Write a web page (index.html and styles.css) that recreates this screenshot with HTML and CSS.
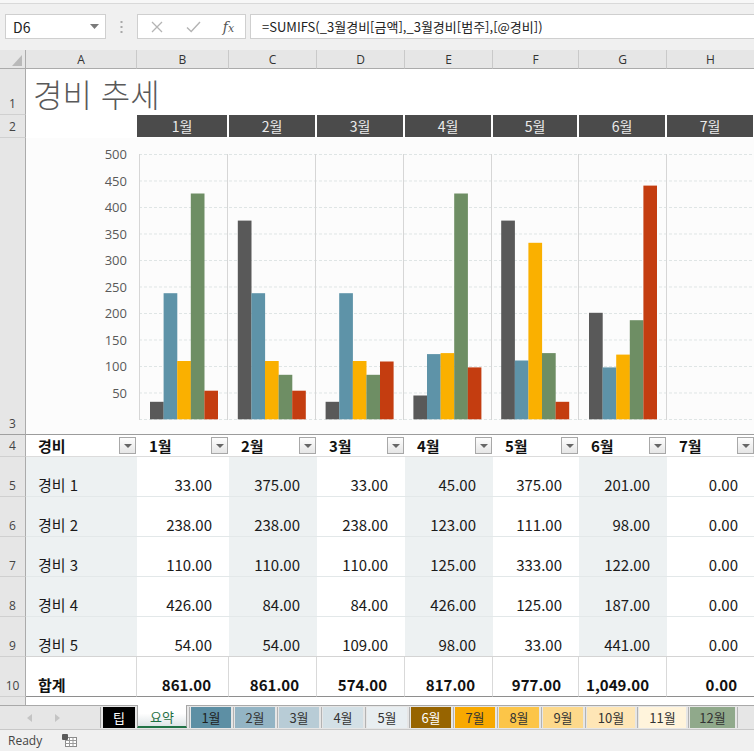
FILE: index.html
```html
<!DOCTYPE html>
<html lang="ko">
<head>
<meta charset="utf-8">
<title>경비 추세</title>
<link rel="stylesheet" href="styles.css">
</head>
<body>
<div class="topstrip"></div>
<div class="fbar">
  <div class="namebox"><span>D6</span><svg class="nb-arrow" width="9" height="5" viewBox="0 0 9 5"><path d="M0 0H9L4.5 5Z" fill="#7a7a7a"/></svg></div>
  <div class="vdots"><svg width="3" height="12" viewBox="0 0 3 12"><rect x="0.5" y="0" width="2" height="2" fill="#a8a8a8"/><rect x="0.5" y="5" width="2" height="2" fill="#a8a8a8"/><rect x="0.5" y="10" width="2" height="2" fill="#a8a8a8"/></svg></div>
  <div class="fbtns">
    <span class="fb"><svg width="12" height="12" viewBox="0 0 12 12"><path d="M1 1L11 11M11 1L1 11" stroke="#b4b4b4" stroke-width="1.3" fill="none"/></svg></span>
    <span class="fb"><svg width="15" height="12" viewBox="0 0 15 12"><path d="M1 6.5L5.2 10.5L14 1" stroke="#b4b4b4" stroke-width="1.4" fill="none"/></svg></span>
    <span class="fb fx"><i>f</i><i class="fxx">x</i></span>
  </div>
  <div class="finput">=SUMIFS(_3월경비[금액],_3월경비[범주],[@경비])</div>
</div>

<div class="sheet">
  <!-- column headers -->
  <div class="corner"><svg width="10" height="11" viewBox="0 0 10 11"><path d="M10 0V11H0Z" fill="#b9b9b9"/></svg></div>
  <div class="ch">A</div><div class="ch">B</div><div class="ch">C</div><div class="ch">D</div>
  <div class="ch">E</div><div class="ch">F</div><div class="ch">G</div><div class="ch">H</div>

  <!-- row 1 -->
  <div class="rh">1</div>
  <div class="title">경비 추세</div>

  <!-- row 2 -->
  <div class="rh">2</div>
  <div class="blank"></div>
  <div class="mh">1월</div><div class="mh">2월</div><div class="mh">3월</div><div class="mh">4월</div>
  <div class="mh">5월</div><div class="mh">6월</div><div class="mh">7월</div>

  <!-- row 3 : chart -->
  <div class="rh rh3">3</div>
  <div class="chart">
    <svg width="729" height="296" viewBox="0 0 729 296">
      <path class="grid" d="M113 16.5H729M113 43H729M113 69.5H729M113 96H729M113 122.5H729M113 149H729M113 175.5H729M113 202H729M113 228.5H729M113 255H729M113 281.5H729"/>
      <path class="vgrid" d="M113.5 16V282M201.5 16V282M289.5 16V282M377.5 16V282M465.5 16V282M552.5 16V282M640.5 16V282"/>
      <g class="axis">
        <text x="101" y="21">500</text>
        <text x="101" y="47.5">450</text>
        <text x="101" y="74">400</text>
        <text x="101" y="100.5">350</text>
        <text x="101" y="127">300</text>
        <text x="101" y="153.5">250</text>
        <text x="101" y="180">200</text>
        <text x="101" y="206.5">150</text>
        <text x="101" y="233">100</text>
        <text x="101" y="259.5">50</text>
      </g>
      <g>
        <rect class="s1" x="124" y="263.8" width="13.7" height="17.5"/>
        <rect class="s2" x="137.6" y="155.2" width="13.7" height="126.1"/>
        <rect class="s3" x="151.2" y="223" width="13.7" height="58.3"/>
        <rect class="s4" x="164.8" y="55.5" width="13.7" height="225.8"/>
        <rect class="s5" x="178.4" y="252.7" width="13.6" height="28.6"/>

        <rect class="s1" x="211.8" y="82.6" width="13.7" height="198.7"/>
        <rect class="s2" x="225.4" y="155.2" width="13.7" height="126.1"/>
        <rect class="s3" x="239" y="223" width="13.7" height="58.3"/>
        <rect class="s4" x="252.6" y="236.8" width="13.7" height="44.5"/>
        <rect class="s5" x="266.2" y="252.7" width="13.6" height="28.6"/>

        <rect class="s1" x="299.6" y="263.8" width="13.7" height="17.5"/>
        <rect class="s2" x="313.2" y="155.2" width="13.7" height="126.1"/>
        <rect class="s3" x="326.8" y="223" width="13.7" height="58.3"/>
        <rect class="s4" x="340.4" y="236.8" width="13.7" height="44.5"/>
        <rect class="s5" x="354" y="223.5" width="13.6" height="57.8"/>

        <rect class="s1" x="387.4" y="257.5" width="13.7" height="23.8"/>
        <rect class="s2" x="401" y="216.1" width="13.7" height="65.2"/>
        <rect class="s3" x="414.6" y="215.1" width="13.7" height="66.2"/>
        <rect class="s4" x="428.2" y="55.5" width="13.7" height="225.8"/>
        <rect class="s5" x="441.8" y="229.4" width="13.6" height="51.9"/>

        <rect class="s1" x="475.2" y="82.6" width="13.7" height="198.7"/>
        <rect class="s2" x="488.8" y="222.5" width="13.7" height="58.8"/>
        <rect class="s3" x="502.4" y="104.8" width="13.7" height="176.5"/>
        <rect class="s4" x="516" y="215.1" width="13.7" height="66.2"/>
        <rect class="s5" x="529.6" y="263.8" width="13.6" height="17.5"/>

        <rect class="s1" x="563" y="174.8" width="13.7" height="106.5"/>
        <rect class="s2" x="576.6" y="229.4" width="13.7" height="51.9"/>
        <rect class="s3" x="590.2" y="216.6" width="13.7" height="64.7"/>
        <rect class="s4" x="603.8" y="182.2" width="13.7" height="99.1"/>
        <rect class="s5" x="617.4" y="47.6" width="13.6" height="233.7"/>
      </g>
    </svg>
  </div>

  <!-- row 4 : table header -->
  <div class="rh rh4">4</div>
  <div class="th"><span>경비</span><span class="dd"></span></div>
  <div class="th"><span>1월</span><span class="dd"></span></div>
  <div class="th"><span>2월</span><span class="dd"></span></div>
  <div class="th"><span>3월</span><span class="dd"></span></div>
  <div class="th"><span>4월</span><span class="dd"></span></div>
  <div class="th"><span>5월</span><span class="dd"></span></div>
  <div class="th"><span>6월</span><span class="dd"></span></div>
  <div class="th"><span>7월</span><span class="dd"></span></div>

  <!-- row 5 -->
  <div class="rh">5</div>
  <div class="c lab band">경비 1</div>
  <div class="c">33.00</div><div class="c band">375.00</div><div class="c">33.00</div><div class="c band">45.00</div>
  <div class="c">375.00</div><div class="c band">201.00</div><div class="c">0.00</div>

  <!-- row 6 -->
  <div class="rh">6</div>
  <div class="c lab band">경비 2</div>
  <div class="c">238.00</div><div class="c band">238.00</div><div class="c">238.00</div><div class="c band">123.00</div>
  <div class="c">111.00</div><div class="c band">98.00</div><div class="c">0.00</div>

  <!-- row 7 -->
  <div class="rh">7</div>
  <div class="c lab band">경비 3</div>
  <div class="c">110.00</div><div class="c band">110.00</div><div class="c">110.00</div><div class="c band">125.00</div>
  <div class="c">333.00</div><div class="c band">122.00</div><div class="c">0.00</div>

  <!-- row 8 -->
  <div class="rh">8</div>
  <div class="c lab band">경비 4</div>
  <div class="c">426.00</div><div class="c band">84.00</div><div class="c">84.00</div><div class="c band">426.00</div>
  <div class="c">125.00</div><div class="c band">187.00</div><div class="c">0.00</div>

  <!-- row 9 -->
  <div class="rh">9</div>
  <div class="c lab band last">경비 5</div>
  <div class="c last">54.00</div><div class="c band last">54.00</div><div class="c last">109.00</div><div class="c band last">98.00</div>
  <div class="c last">33.00</div><div class="c band last">441.00</div><div class="c last">0.00</div>

  <!-- row 10 -->
  <div class="rh">10</div>
  <div class="c lab tot">합계</div>
  <div class="c tot">861.00</div><div class="c tot">861.00</div><div class="c tot">574.00</div><div class="c tot">817.00</div>
  <div class="c tot">977.00</div><div class="c tot">1,049.00</div><div class="c tot">0.00</div>

  <!-- row 11 (partial) -->
  <div class="rh rh11"></div>
  <div class="r11"></div>
</div>

<div class="tabbar">
  <div class="nav">
    <svg class="navl" width="5" height="8" viewBox="0 0 5 8"><path d="M5 0V8L0 4Z" fill="#c4c4c4"/></svg>
    <svg class="navr" width="5" height="8" viewBox="0 0 5 8"><path d="M0 0V8L5 4Z" fill="#c4c4c4"/></svg>
  </div>
  <span class="vline"></span>
  <div class="tab t-tip">팁</div>
  <div class="tab active">요약</div>
  <span class="sep"></span>
  <div class="tab t1">1월</div><span class="sep"></span>
  <div class="tab t2">2월</div><span class="sep"></span>
  <div class="tab t3">3월</div><span class="sep"></span>
  <div class="tab t4">4월</div><span class="sep"></span>
  <div class="tab t5">5월</div><span class="sep"></span>
  <div class="tab t6">6월</div><span class="sep"></span>
  <div class="tab t7">7월</div><span class="sep"></span>
  <div class="tab t8">8월</div><span class="sep"></span>
  <div class="tab t9">9월</div><span class="sep"></span>
  <div class="tab t10">10월</div><span class="sep"></span>
  <div class="tab t11">11월</div><span class="sep"></span>
  <div class="tab t12">12월</div><span class="sep"></span>
</div>

<div class="status">
  <span class="ready">Ready</span>
  <svg class="macro" width="15" height="13" viewBox="0 0 15 13">
    <rect x="3.5" y="3.5" width="11" height="9" fill="#fff" stroke="#8a8a8a"/>
    <path d="M3.5 6.5H14.5M3.5 9.5H14.5M7.5 3.5V12.5M11 3.5V12.5" stroke="#9a9a9a" stroke-width="1"/>
    <rect x="0" y="0" width="6" height="6" rx="1" fill="#5a5a5a"/>
  </svg>
</div>
</body>
</html>
```

FILE: styles.css
```css
* { box-sizing: border-box; }
html, body { margin: 0; padding: 0; }
body {
  width: 754px;
  height: 751px;
  overflow: hidden;
  background: #f0f0f0;
  font-family: "Noto Sans CJK KR", "Noto Sans", sans-serif;
  color: #222;
}

/* ---------- top / formula bar ---------- */
.topstrip {
  height: 4px;
  background: #f7f7f7;
  border-bottom: 1px solid #d9d9d9;
}
.fbar {
  height: 46px;
  display: flex;
  align-items: flex-start;
  padding-top: 10px;
  background: #f0f0f0;
}
.namebox {
  margin-left: 5px;
  width: 101px;
  height: 25px;
  background: #fff;
  border: 1px solid #cfcfcf;
  display: flex;
  align-items: center;
  justify-content: space-between;
  padding: 0 6px 0 7px;
  font-size: 14px;
}
.vdots {
  width: 31px;
  height: 25px;
  display: flex;
  align-items: center;
  justify-content: center;
}
.fbtns {
  width: 109px;
  height: 25px;
  background: #fff;
  border: 1px solid #cfcfcf;
  display: flex;
  align-items: center;
}
.fb {
  width: 37px;
  height: 23px;
  display: flex;
  align-items: center;
  justify-content: center;
}
.fb.fx {
  width: 33px;
  font-family: "DejaVu Serif", "Liberation Serif", serif;
  font-size: 14px;
  color: #555;
}
.fxx { font-size: 11px; margin-top: 3px; }
.finput {
  flex: 1;
  margin-left: 4px;
  height: 25px;
  background: #fff;
  border: 1px solid #cfcfcf;
  border-right: none;
  padding-left: 11px;
  font-size: 13px;
  display: flex;
  align-items: center;
  white-space: nowrap;
  color: #222;
}

/* ---------- sheet grid ---------- */
.sheet {
  width: 754px;
  height: 655px;
  overflow: hidden;
  background: #fff;
  display: grid;
  grid-template-columns: 26px 111px 92px 88px 88px 88px 86px 88px 88px;
  grid-template-rows: 19px 46px 23px 297px 22px repeat(6, 40px) 8px;
}
.corner {
  background: #e6e6e6;
  border-right: 1px solid #ababab;
  border-bottom: 1px solid #ababab;
  display: flex;
  align-items: flex-end;
  justify-content: flex-end;
  padding: 0 3px 2px 0;
}
.ch {
  background: #e6e6e6;
  border-right: 1px solid #c9c9c9;
  border-bottom: 1px solid #ababab;
  font-family: "Open Sans", "Noto Sans", sans-serif;
  font-size: 12px;
  color: #333;
  display: flex;
  align-items: center;
  justify-content: center;
}
.rh {
  background: #e6e6e6;
  border-right: 1px solid #ababab;
  border-bottom: 1px solid #d0d0d0;
  font-family: "Open Sans", "Noto Sans", sans-serif;
  font-size: 12px;
  color: #444;
  display: flex;
  align-items: flex-end;
  justify-content: center;
  padding-bottom: 2px;
  line-height: 16px;
}
.rh3 { border-bottom-color: #a0a0a0; }
.rh11 { border-bottom: none; }

.title {
  grid-column: 2 / -1;
  font-size: 32px;
  font-weight: 300;
  color: #595959;
  padding-left: 7px;
  padding-bottom: 2px;
  line-height: 40px;
  display: flex;
  align-items: flex-end;
}
.blank { background: #fff; }
.mh {
  background: #4b4b4b;
  color: #eaeaea;
  font-size: 14px;
  display: flex;
  align-items: center;
  justify-content: center;
  border-right: 2px solid #fff;
  border-bottom: 1px solid #fff;
}
.chart {
  grid-column: 2 / -1;
  border-bottom: 1px solid #9c9c9c;
  background: #fcfcfc;
  overflow: hidden;
}
.chart svg { display: block; }
.grid { stroke: #dfe5e5; stroke-width: 1; stroke-dasharray: 3 2; fill: none; }
.vgrid { stroke: #d6d6d6; stroke-width: 1; fill: none; }
.axis text {
  font-family: "Open Sans", "Noto Sans", sans-serif;
  font-size: 13px;
  fill: #595959;
  text-anchor: end;
}
.s1 { fill: #595959; }
.s2 { fill: #5e93a8; }
.s3 { fill: #fab000; }
.s4 { fill: #6e8e64; }
.s5 { fill: #c43d10; }

/* table header */
.th {
  display: flex;
  align-items: center;
  justify-content: space-between;
  padding-left: 12px;
  font-weight: 700;
  font-size: 15px;
  color: #111;
  border-bottom: 1px solid #dcdcdc;
}
.dd {
  width: 17px;
  height: 17px;
  border: 1px solid #a8a8a8;
  background: linear-gradient(#fdfdfd, #e6e6e6);
  margin-right: 1px;
  display: flex;
  align-items: center;
  justify-content: center;
}
.dd::after {
  content: "";
  border-left: 4px solid transparent;
  border-right: 4px solid transparent;
  border-top: 4px solid #666;
}

/* data cells */
.c {
  display: flex;
  align-items: flex-end;
  justify-content: flex-end;
  padding: 0 17px 1px 0;
  font-size: 15px;
  line-height: 20px;
  color: #1a1a1a;
  border-bottom: 1px solid #e3e8e9;
  white-space: nowrap;
}
.c.lab { justify-content: flex-start; padding-left: 12px; }
.band { background: #edf1f2; }
.c.last { border-bottom-color: #d4d4d4; }
.c.tot {
  font-weight: 700;
  color: #111;
  border-right: 1px solid #d9d9d9;
  border-bottom: 1px solid #8e8e8e;
  padding-right: 17px;
}
.r11 { grid-column: 2 / -1; background: #fff; }

/* ---------- sheet tabs ---------- */
.tabbar {
  height: 24px;
  display: flex;
  align-items: flex-start;
  background: #e6e6e6;
  border-top: 1px solid #a9a9a9;
}
.nav {
  width: 100px;
  height: 23px;
  display: flex;
  align-items: center;
  padding-left: 27px;
}
.navr { margin-left: 23px; }
.vline {
  width: 1px;
  height: 21px;
  margin: 1px 2px 0 0;
  background: #a6a6a6;
}
.tab {
  height: 21px;
  margin-top: 1px;
  width: 40px;
  display: flex;
  align-items: center;
  justify-content: center;
  font-size: 13px;
  color: #333;
}
.sep {
  width: 4px;
  height: 21px;
  margin-top: 1px;
  display: flex;
  justify-content: center;
}
.sep::before {
  content: "";
  width: 1px;
  background: #b3b3b3;
}
.t-tip { width: 32px; background: #000; color: #fff; margin-right: 2px; }
.tab.active {
  width: 50px;
  height: 23px;
  margin-top: -1px;
  background: linear-gradient(#ffffff 40%, #dfe5e7);
  color: #1e6f42;
  border-left: 1px solid #a6a6a6;
  border-right: 1px solid #a6a6a6;
  border-bottom: 2px solid #217346;
  padding-top: 1px;
}
.t1 { background: #5d8fa4; color: #1f1f1f; }
.t2 { background: #93b4c4; }
.t3 { background: #b8ccd6; }
.t4 { background: #d3e0e6; }
.t5 { background: #e8eef1; }
.t6 { background: #976400; color: #fff; }
.t7 { background: #f8a900; }
.t8 { background: #fcc548; }
.t9 { background: #fdd98b; }
.t10 { background: #fee6b6; width: 48px; }
.t11 { background: #fff4dc; width: 47px; }
.t12 { background: #90a98b; width: 45px; }

/* ---------- status bar ---------- */
.status {
  height: 22px;
  background: #f0f0f0;
  border-top: 1px solid #c8c8c8;
  display: flex;
  align-items: center;
  padding-left: 8px;
  font-family: "Open Sans", "Noto Sans", sans-serif;
  font-size: 12px;
  color: #444;
}
.macro { margin-left: 20px; }
```
